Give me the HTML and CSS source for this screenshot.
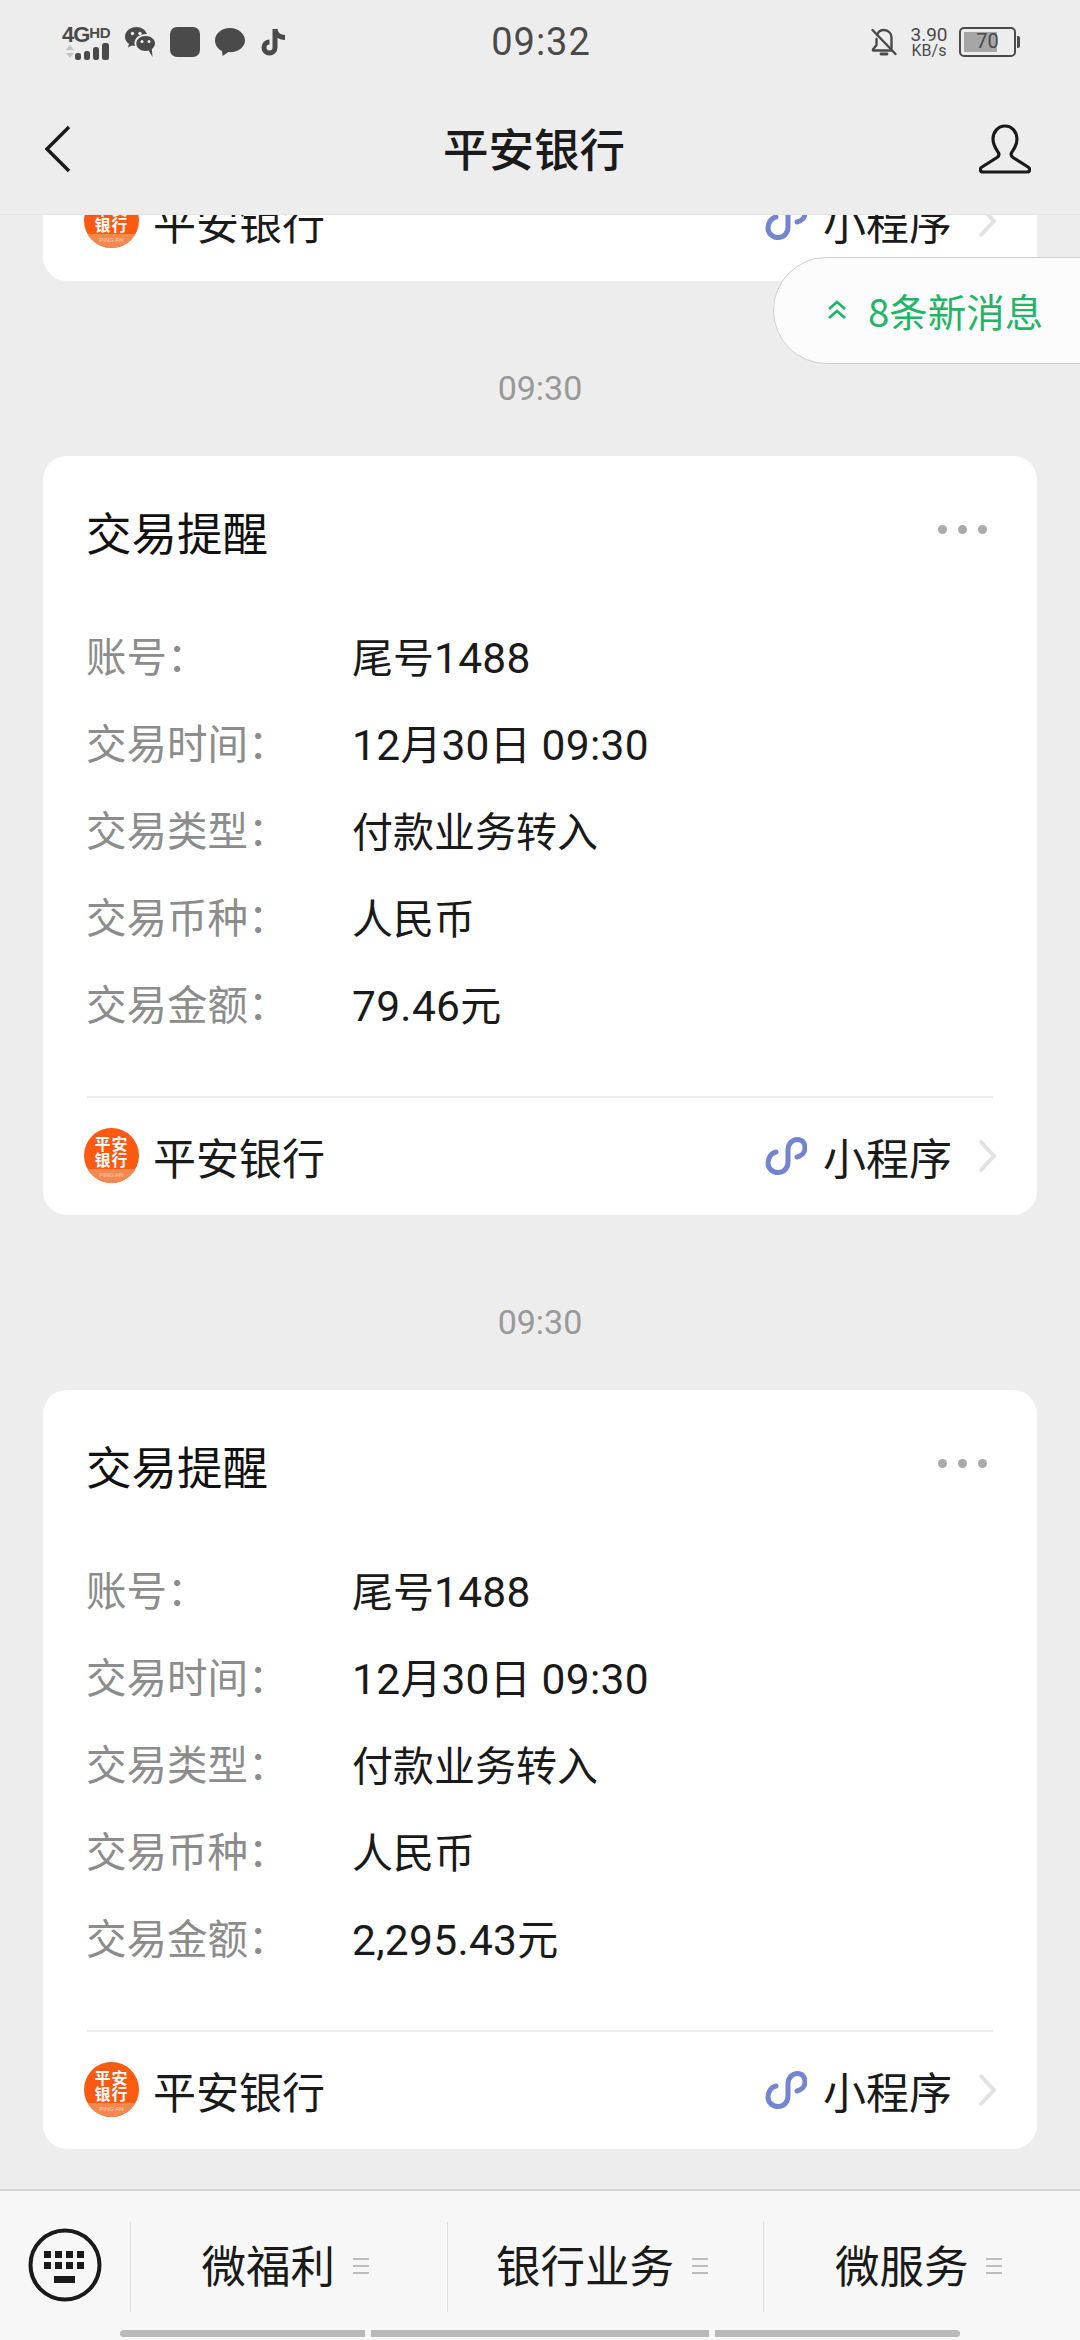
FILE: index.html
```html
<!DOCTYPE html>
<html lang="zh-CN">
<head>
    <meta charset="UTF-8">
    <title>平安银行</title>
    <link rel="stylesheet" href="styles.css">
</head>
<body>

<div class="page">

    <div class="header">
        <div class="status-bar">
            <div class="status-left">
                <div class="net">
                    <span class="net-text">4G<b>HD</b></span>
                    <svg class="net-bars" width="48" height="17" viewBox="0 0 48 17">
                        <path d="M4 7l4-5 4 5zM4 10l4 5 4-5z" fill="#c4c4c4"/>
                        <rect x="13" y="10" width="6" height="7" rx="2.5" fill="#4a4a4a"/>
                        <rect x="22" y="8" width="6" height="9" rx="2.5" fill="#4a4a4a"/>
                        <rect x="31" y="4" width="6" height="13" rx="2.5" fill="#4a4a4a"/>
                        <rect x="40" y="0" width="7" height="17" rx="2.5" fill="#4a4a4a"/>
                    </svg>
                </div>
                <svg class="app-icon" width="30" height="30" viewBox="0 0 30 30">
                    <path d="M11.5 0C5 0 0 4.3 0 9.8c0 3 1.5 5.500 4 7.300L3 20.500l4-2c1 .3 2 .5 3 .6-.3-1-.5-1.900-.5-2.800C9.500 10.800 14.600 7 20.700 7c.4 0 .8 0 1.200.1C20.700 3 16.500 0 11.500 0z" fill="#4a4a4a"/>
                    <path d="M20.700 9C15.400 9 11.300 12.400 11.300 16.500S15.400 24 20.700 24c1 0 2-.1 2.900-.4L27.500 30l-.7-7.900c1.900-1.400 3.200-3.400 3.200-5.600C30 12.400 25.900 9 20.700 9z" fill="#4a4a4a"/>
                    <circle cx="7.5" cy="6.5" r="1.7" fill="#ededed"/>
                    <circle cx="15" cy="6.5" r="1.7" fill="#ededed"/>
                    <circle cx="17" cy="14.5" r="1.5" fill="#ededed"/>
                    <circle cx="24" cy="14.5" r="1.5" fill="#ededed"/>
                </svg>
                <div class="app-square"></div>
                <svg class="app-icon" width="30" height="30" viewBox="0 0 30 30">
                    <path d="M15 1C6.700 1 0 6.500 0 13.500 0 18 2.800 21.900 7 24.100L7.500 29l6-3.900c.5 0 1 .1 1.500.1 8.300 0 15-5.300 15-11.700S23.300 1 15 1z" fill="#4a4a4a"/>
                </svg>
                <svg class="app-icon" width="28" height="30" viewBox="0 0 28 30">
                    <path d="M15 2v18.500a5.500 5.500 0 1 1-5.500-5.500M15 2c.5 5 4.500 8.500 10 8.500" fill="none" stroke="#4a4a4a" stroke-width="5"/>
                </svg>
            </div>
            <div class="clock">09:32</div>
            <div class="status-right">
                <svg width="26" height="30" viewBox="0 0 26 30">
                    <path d="M6 8c1-3 4-5 7-5 4.500 0 7.500 3.500 7.500 7.500V21M5.500 12v6L2 22.500c-.3.500 0 1 .5 1H20" fill="none" stroke="#4a4a4a" stroke-width="2.4" stroke-linecap="round"/>
                    <path d="M10 27h6" stroke="#4a4a4a" stroke-width="2.8" stroke-linecap="round"/>
                    <path d="M1.500 3l23 24" stroke="#4a4a4a" stroke-width="2.4" stroke-linecap="round"/>
                </svg>
                <div class="speed">
                    <span>3.90</span>
                    <span class="speed-unit">KB/s</span>
                </div>
                <div class="battery">
                    <div class="battery-body">
                        <div class="battery-fill"></div>
                        <span class="battery-num">70</span>
                    </div>
                    <div class="battery-nub"></div>
                </div>
            </div>
        </div>

        <div class="nav-bar">
            <svg width="26" height="48" viewBox="0 0 26 48">
                <path d="M24 2L2 24l22 22" fill="none" stroke="#1a1a1a" stroke-width="3.4"/>
            </svg>
            <h1 class="nav-title">平安银行</h1>
            <svg width="52" height="50" viewBox="0 0 52 50">
                <path d="M26 2C19 2 14 8 14 15c0 6 3 10 5 13 1.500 2 1 4-1 5.500L3 43c-2.500 1.500-2 5 1 5h44c3 0 3.500-3.500 1-5l-15-9.500c-2-1.500-2.500-3.500-1-5.500 2-3 5-7 5-13 0-7-5-13-12-13z" fill="none" stroke="#1a1a1a" stroke-width="3.2"/>
            </svg>
        </div>
    </div>

    <div class="messages">
        <div class="card card-tail">
            <div class="card-footer">
                <div class="bank">
                    <div class="bank-logo">
                        <span class="bank-logo-name">平安<br>银行</span>
                        <span class="bank-logo-band">PING AN</span>
                    </div>
                    <span>平安银行</span>
                </div>
                <div class="mini">
                    <svg width="42" height="38" viewBox="0 0 42 38">
                        <path d="M11 15C6 16 3 21 3 26c0 6 5 9.500 10 9.500 6 0 10-4.500 10-10.500V13c0-6 4-10.500 9.500-10.500S40 7 40 11c0 5-4 8-8 9" fill="none" stroke="#7584d0" stroke-width="5" stroke-linecap="round"/>
                    </svg>
                    <span class="mini-text">小程序</span>
                    <svg width="18" height="34" viewBox="0 0 18 34">
                        <path d="M2 2l14 15L2 32" fill="none" stroke="#e2e2e2" stroke-width="4"/>
                    </svg>
                </div>
            </div>
        </div>

        <div class="msg-time">09:30</div>

        <div class="card">
            <div class="card-title-row">
                <h2 class="card-title">交易提醒</h2>
                <div class="dots"><i></i><i></i><i></i></div>
            </div>
            <div class="rows">
                <div class="row"><span class="row-label">账号：</span><span>尾号<span class="num">1488</span></span></div>
                <div class="row"><span class="row-label">交易时间：</span><span><span class="num">12</span>月<span class="num">30</span>日<span class="num"> 09:30</span></span></div>
                <div class="row"><span class="row-label">交易类型：</span><span>付款业务转入</span></div>
                <div class="row"><span class="row-label">交易币种：</span><span>人民币</span></div>
                <div class="row"><span class="row-label">交易金额：</span><span><span class="num">79.46</span>元</span></div>
            </div>
            <div class="card-footer">
                <div class="bank">
                    <div class="bank-logo">
                        <span class="bank-logo-name">平安<br>银行</span>
                        <span class="bank-logo-band">PING AN</span>
                    </div>
                    <span>平安银行</span>
                </div>
                <div class="mini">
                    <svg width="42" height="38" viewBox="0 0 42 38">
                        <path d="M11 15C6 16 3 21 3 26c0 6 5 9.500 10 9.500 6 0 10-4.500 10-10.500V13c0-6 4-10.500 9.500-10.500S40 7 40 11c0 5-4 8-8 9" fill="none" stroke="#7584d0" stroke-width="5" stroke-linecap="round"/>
                    </svg>
                    <span class="mini-text">小程序</span>
                    <svg width="18" height="34" viewBox="0 0 18 34">
                        <path d="M2 2l14 15L2 32" fill="none" stroke="#e2e2e2" stroke-width="4"/>
                    </svg>
                </div>
            </div>
        </div>

        <div class="msg-time">09:30</div>

        <div class="card">
            <div class="card-title-row">
                <h2 class="card-title">交易提醒</h2>
                <div class="dots"><i></i><i></i><i></i></div>
            </div>
            <div class="rows">
                <div class="row"><span class="row-label">账号：</span><span>尾号<span class="num">1488</span></span></div>
                <div class="row"><span class="row-label">交易时间：</span><span><span class="num">12</span>月<span class="num">30</span>日<span class="num"> 09:30</span></span></div>
                <div class="row"><span class="row-label">交易类型：</span><span>付款业务转入</span></div>
                <div class="row"><span class="row-label">交易币种：</span><span>人民币</span></div>
                <div class="row"><span class="row-label">交易金额：</span><span><span class="num">2,295.43</span>元</span></div>
            </div>
            <div class="card-footer">
                <div class="bank">
                    <div class="bank-logo">
                        <span class="bank-logo-name">平安<br>银行</span>
                        <span class="bank-logo-band">PING AN</span>
                    </div>
                    <span>平安银行</span>
                </div>
                <div class="mini">
                    <svg width="42" height="38" viewBox="0 0 42 38">
                        <path d="M11 15C6 16 3 21 3 26c0 6 5 9.500 10 9.500 6 0 10-4.500 10-10.500V13c0-6 4-10.500 9.500-10.500S40 7 40 11c0 5-4 8-8 9" fill="none" stroke="#7584d0" stroke-width="5" stroke-linecap="round"/>
                    </svg>
                    <span class="mini-text">小程序</span>
                    <svg width="18" height="34" viewBox="0 0 18 34">
                        <path d="M2 2l14 15L2 32" fill="none" stroke="#e2e2e2" stroke-width="4"/>
                    </svg>
                </div>
            </div>
        </div>

        <!-- 新消息提示浮在消息列表上面 -->
        <div class="new-pill">
            <svg width="20" height="20" viewBox="0 0 20 20">
                <path d="M2 9l8-7 8 7M2 18l8-7 8 7" fill="none" stroke="#22b567" stroke-width="2.8"/>
            </svg>
            <span>8条新消息</span>
        </div>
    </div>

    <div class="bottom-bar">
        <div class="tabs">
            <div class="keyboard-cell">
                <svg width="74" height="74" viewBox="0 0 74 74">
                    <circle cx="37" cy="37" r="34.5" fill="none" stroke="#1a1a1a" stroke-width="4"/>
                    <g fill="#1a1a1a">
                        <rect x="16" y="23" width="7" height="7"/>
                        <rect x="27" y="23" width="7" height="7"/>
                        <rect x="38" y="23" width="7" height="7"/>
                        <rect x="49" y="23" width="7" height="7"/>
                        <rect x="16" y="34" width="7" height="7"/>
                        <rect x="27" y="34" width="7" height="7"/>
                        <rect x="38" y="34" width="7" height="7"/>
                        <rect x="49" y="34" width="7" height="7"/>
                        <rect x="26" y="48" width="21" height="7"/>
                    </g>
                </svg>
            </div>
            <div class="tab"><span class="tab-name">微福利</span><div class="tab-menu"><i></i><i></i><i></i></div></div>
            <div class="tab"><span class="tab-name">银行业务</span><div class="tab-menu"><i></i><i></i><i></i></div></div>
            <div class="tab"><span class="tab-name">微服务</span><div class="tab-menu"><i></i><i></i><i></i></div></div>
        </div>
        <div class="scroll-bars">
            <div class="scroll-seg seg-first"></div>
            <div class="scroll-seg seg-mid"></div>
            <div class="scroll-seg seg-last"></div>
        </div>
    </div>

</div>

</body>
</html>
```

FILE: styles.css
```css
* {
    box-sizing: border-box;
}

html,
body {
    margin: 0;
    padding: 0;
}

body {
    width: 1080px;
    height: 2340px;
    overflow: hidden;
    background: #ededed;
    color: #1a1a1a;
    font-family: "Noto Sans CJK SC", Roboto, sans-serif;
}

.page {
    display: flex;
    flex-direction: column;
    height: 2340px;
}

/* 顶部状态栏 + 导航 */
.header {
    position: relative;
    z-index: 2;
    height: 214px;
    flex: none;
    background: #ededed;
    box-shadow: 0 1px 0 #e4e4e4;
}

.status-bar {
    display: flex;
    align-items: center;
    justify-content: space-between;
    height: 84px;
    padding: 0 60px 0 62px;
    color: #4a4a4a;
}

.status-left {
    display: flex;
    align-items: center;
    gap: 15px;
    width: 300px;
}

.net {
    display: flex;
    flex-direction: column;
    width: 48px;
}

.net-text {
    font-family: "Liberation Sans", sans-serif;
    font-size: 22px;
    font-weight: 700;
    line-height: 17px;
    letter-spacing: -1px;
    white-space: nowrap;
}

.net-text b {
    font-size: 15px;
    letter-spacing: -0.5px;
    vertical-align: 4px;
}

.net-bars {
    display: block;
}

.app-icon {
    flex: none;
}

.app-square {
    width: 30px;
    height: 30px;
    border-radius: 7px;
    background: #4a4a4a;
}

.clock {
    font-family: Roboto, sans-serif;
    font-size: 38px;
    letter-spacing: 1px;
}

.status-right {
    display: flex;
    align-items: center;
    justify-content: flex-end;
    width: 300px;
}

.speed {
    display: flex;
    flex-direction: column;
    align-items: center;
    width: 38px;
    margin: 0 11px 0 13px;
    font-family: Roboto, sans-serif;
    font-size: 19px;
    line-height: 17px;
}

.speed-unit {
    font-size: 16px;
    line-height: 15px;
}

.battery {
    display: flex;
    align-items: center;
}

.battery-body {
    position: relative;
    width: 57px;
    height: 30px;
    padding: 3px;
    border: 2.5px solid #4a4a4a;
    border-radius: 5px;
}

.battery-fill {
    width: 70%;
    height: 100%;
    background: #a6a6a6;
}

.battery-num {
    position: absolute;
    top: 0;
    left: 0;
    width: 100%;
    font-family: Roboto, sans-serif;
    font-size: 20px;
    line-height: 25px;
    text-align: center;
}

.battery-nub {
    width: 3px;
    height: 12px;
    margin-left: 1px;
    background: #4a4a4a;
    border-radius: 0 2px 2px 0;
}

.nav-bar {
    display: grid;
    grid-template-columns: 398px 1fr 52px;
    align-items: center;
    height: 130px;
    padding: 0 49px 0 45px;
}

.nav-title {
    margin: 0 0 5px;
    font-size: 45.5px;
    font-weight: 500;
    line-height: 60px;
}

/* 消息列表 */
.messages {
    position: relative;
    flex: 1;
    overflow: hidden;
    padding: 0 43px;
}

.card {
    background: #fff;
    border-radius: 24px;
    padding-top: 45px;
}

.card-tail {
    display: flex;
    flex-direction: column;
    justify-content: flex-end;
    height: 67px;
    padding-top: 0;
    padding-bottom: 1px;
    border-radius: 0 0 24px 24px;
}

.msg-time {
    padding: 85px 0 46px;
    font-family: Roboto, sans-serif;
    font-size: 34px;
    line-height: 44px;
    color: #999;
    text-align: center;
}

.card-title-row {
    display: flex;
    align-items: center;
    justify-content: space-between;
    height: 60px;
    padding: 0 50px 0 43px;
}

.card-title {
    margin: 0;
    font-size: 45.5px;
    font-weight: 400;
    line-height: 60px;
    color: #111;
}

.dots {
    display: flex;
    gap: 11px;
    margin-bottom: 4px;
}

.dots i {
    width: 9px;
    height: 9px;
    border-radius: 50%;
    background: #aaa;
}

.rows {
    margin-top: 50px;
    padding: 0 43px;
}

.row {
    display: flex;
    align-items: center;
    height: 87px;
    font-size: 41px;
}

.row-label {
    width: 266px;
    flex: none;
    font-size: 40.5px;
    color: #8c8c8c;
}

/* 数字比汉字略大，和截图里的字形宽度对齐 */
.num {
    font-family: Roboto, sans-serif;
    font-size: 42.5px;
    letter-spacing: 0.3px;
    white-space: pre;
}

.card-footer {
    display: flex;
    flex: none;
    align-items: center;
    justify-content: space-between;
    height: 119px;
    margin: 50px 44px 0;
    padding: 0 0 2px;
    border-top: 2px solid #eee;
    font-size: 43px;
}

.card-tail .card-footer {
    margin-top: 0;
}

.bank {
    display: flex;
    align-items: center;
    gap: 14px;
    margin-left: -3px;
}

.bank-logo {
    display: flex;
    flex-direction: column;
    width: 55px;
    height: 55px;
    overflow: hidden;
    border-radius: 50%;
    background: #fb5a10;
    color: #fff;
    text-align: center;
}

.bank-logo-name {
    margin-top: 7px;
    font-size: 16px;
    font-weight: 700;
    line-height: 16px;
    letter-spacing: 1px;
}

.bank-logo-band {
    flex: 1;
    margin-top: 2px;
    background: #f5884f;
    font-family: "Liberation Sans", sans-serif;
    font-size: 6px;
    line-height: 12px;
    color: #fbd0b8;
}

.mini {
    display: flex;
    align-items: center;
    margin-right: -3px;
}

.mini-text {
    margin: 0 26px 0 16px;
}

/* 右上角的新消息气泡，压在消息上面 */
.new-pill {
    position: absolute;
    top: 43px;
    left: 773px;
    right: -2px;
    display: flex;
    align-items: center;
    gap: 21px;
    height: 107px;
    padding: 0 0 2px 53px;
    background: #fcfcfc;
    border: 1px solid #cfcfcf;
    border-radius: 54px 0 0 54px;
    font-size: 38.5px;
    color: #22b567;
}

/* 底部菜单 */
.bottom-bar {
    flex: none;
    height: 151px;
    background: #f7f7f7;
    border-top: 2px solid #d4d4d4;
}

.tabs {
    display: flex;
    height: 139px;
    padding-top: 31px;
}

.keyboard-cell {
    width: 130px;
    height: 90px;
    padding: 6px 0 0 28px;
}

.tab {
    display: flex;
    flex: 1;
    align-items: center;
    justify-content: center;
    gap: 18px;
    height: 90px;
    padding-right: 7px;
    border-left: 1px solid #ddd;
    font-size: 44.5px;
}

.tab-name {
    padding-bottom: 8px;
}

.tab-menu {
    display: flex;
    flex-direction: column;
    gap: 5px;
    margin-bottom: 2px;
}

.tab-menu i {
    display: block;
    width: 16px;
    height: 2px;
    background: #bdbdbd;
}

.scroll-bars {
    display: flex;
    gap: 6px;
    width: 840px;
    margin-left: 120px;
}

.scroll-seg {
    height: 7px;
    background: #bababa;
}

.seg-first {
    width: 245px;
    border-radius: 4px 0 0 4px;
}

.seg-mid {
    width: 338px;
}

.seg-last {
    width: 245px;
    border-radius: 0 4px 4px 0;
}
```
